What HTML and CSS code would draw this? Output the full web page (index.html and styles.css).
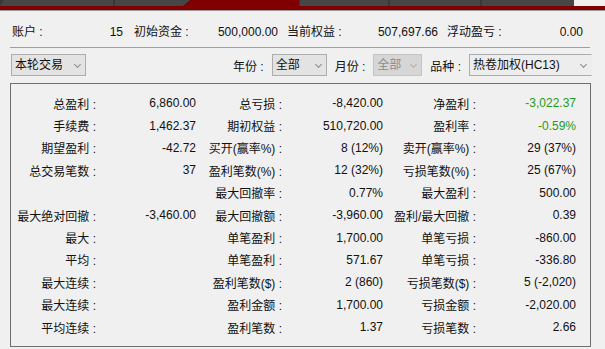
FILE: index.html
```html
<!DOCTYPE html>
<html lang="zh-CN">
	<head>
		<meta charset="UTF-8">
		<title>交易统计</title>
		<link rel="stylesheet" href="styles.css">
	</head>
	<body>
		<div class="tabs">
			<div class="tab tabFirst"></div>
			<div class="tab tabSecond"></div>
			<div class="tab tabActive"></div>
			<div class="tab tabFour"></div>
			<div class="tab tabFive"></div>
			<div class="tab tabSix"></div>
		</div>
		<div class="tabLine"></div>

		<div class="summary">
			<div class="pair pairAccount"><span>账户 :</span><span>15</span></div>
			<div class="pair pairInit"><span>初始资金 :</span><span>500,000.00</span></div>
			<div class="pair pairEquity"><span>当前权益 :</span><span>507,697.66</span></div>
			<div class="pair pairFloat"><span>浮动盈亏 :</span><span>0.00</span></div>
		</div>

		<div class="filters">
			<div class="combo comboRound">本轮交易<i class="arrow"></i></div>
			<span class="filterLabel labelYear">年份 :</span>
			<div class="combo comboYear">全部<i class="arrow"></i></div>
			<span class="filterLabel">月份 :</span>
			<div class="combo comboMonth disabled">全部<i class="arrow"></i></div>
			<span class="filterLabel">品种 :</span>
			<div class="combo comboKind">热卷加权(HC13)<i class="arrow"></i></div>
		</div>

		<div class="panel">
			<span>总盈利 :</span><span>6,860.00</span>
			<span>总亏损 :</span><span>-8,420.00</span>
			<span>净盈利 :</span><span class="green">-3,022.37</span>

			<span>手续费 :</span><span>1,462.37</span>
			<span>期初权益 :</span><span>510,720.00</span>
			<span>盈利率 :</span><span class="green">-0.59%</span>

			<span>期望盈利 :</span><span>-42.72</span>
			<span>买开(赢率%) :</span><span>8 (12%)</span>
			<span>卖开(赢率%) :</span><span>29 (37%)</span>

			<span>总交易笔数 :</span><span>37</span>
			<span>盈利笔数(%) :</span><span>12 (32%)</span>
			<span>亏损笔数(%) :</span><span>25 (67%)</span>

			<span></span><span></span>
			<span>最大回撤率 :</span><span>0.77%</span>
			<span>最大盈利 :</span><span>500.00</span>

			<span>最大绝对回撤 :</span><span>-3,460.00</span>
			<span>最大回撤额 :</span><span>-3,960.00</span>
			<span>盈利/最大回撤 :</span><span>0.39</span>

			<span>最大 :</span><span></span>
			<span>单笔盈利 :</span><span>1,700.00</span>
			<span>单笔亏损 :</span><span>-860.00</span>

			<span>平均 :</span><span></span>
			<span>单笔盈利 :</span><span>571.67</span>
			<span>单笔亏损 :</span><span>-336.80</span>

			<span>最大连续 :</span><span></span>
			<span>盈利笔数($) :</span><span>2 (860)</span>
			<span>亏损笔数($) :</span><span>5 (-2,020)</span>

			<span>最大连续 :</span><span></span>
			<span>盈利金额 :</span><span>1,700.00</span>
			<span>亏损金额 :</span><span>-2,020.00</span>

			<span>平均连续 :</span><span></span>
			<span>盈利笔数 :</span><span>1.37</span>
			<span>亏损笔数 :</span><span>2.66</span>
		</div>
	</body>
</html>
```

FILE: styles.css
```css
body {
	margin: 0;
	background-color: #f0f0f0;
	font-family: "Liberation Sans", "Noto Sans CJK SC", sans-serif;
	font-size: 12px;
	color: #111;
}
.tabs {
	display: flex;
	width: 574px;
	height: 6px;
	background-color: #383838;
}
.tab {
	background-color: #464646;
	margin-right: 2px;
}
.tabFirst {
	width: 113px;
	clip-path: polygon(4px 0, 100% 0, 100% 100%, 0 100%);
}
.tabSecond {
	width: 75px;
	margin-right: -7px;
}
.tabActive {
	width: 116px;
	margin-right: 1px;
	background-color: #800000;
	clip-path: polygon(7px 0, 100% 0, 100% 100%, 0 100%);
}
.tabFour {
	width: 88px;
}
.tabFive {
	width: 90px;
}
.tabSix {
	width: 92px;
	margin-right: 0;
}
.tabLine {
	height: 4px;
	background-color: #800000;
	border-bottom: 1px solid #9a9a9a;
}
.summary {
	display: flex;
	margin: 0 15px 0 10px;
	padding: 14px 0 0 2px;
	height: 22px;
	line-height: 14px;
	border-bottom: 1px solid #a0a0a0;
}
.pair {
	display: flex;
	justify-content: space-between;
}
.pairAccount {
	width: 111px;
}
.pairInit {
	width: 144px;
	margin-left: 11px;
}
.pairEquity {
	width: 151px;
	margin-left: 9px;
}
.pairFloat {
	width: 136px;
	margin-left: 9px;
}
.filters {
	display: flex;
	align-items: center;
	height: 22px;
	margin: 6px 13px 0 11px;
}
.combo {
	position: relative;
	box-sizing: border-box;
	height: 22px;
	line-height: 20px;
	padding-left: 3px;
	border: 1px solid #adadad;
	background-color: #e3e3e3;
}
.arrow {
	position: absolute;
	right: 5px;
	top: 7px;
	width: 4px;
	height: 4px;
	border-right: 1px solid #8a8a8a;
	border-bottom: 1px solid #8a8a8a;
	transform: rotate(45deg);
}
.comboRound {
	width: 75px;
}
.comboYear {
	width: 55px;
	margin-left: 8px;
}
.comboMonth {
	width: 49px;
	margin-left: 8px;
}
.comboKind {
	width: 123px;
	margin-left: 8px;
	background-color: #ededed;
	border-right-color: #ededed;
}
.disabled {
	background-color: #d6d6d6;
	border-color: #c4c4c4;
	color: #8c8c8c;
}
.disabled .arrow {
	border-color: #b0b0b0;
}
.filterLabel {
	margin-left: 8px;
}
.labelYear {
	margin-left: auto;
}
.panel {
	box-sizing: border-box;
	height: 264px;
	margin: 7px 14px 0 10px;
	padding-top: 8px;
	border: 1px solid #6e6e6e;
	display: grid;
	grid-template-columns: 85px 100px 86px 101px 93px 100px;
	grid-auto-rows: 22.4px;
	align-items: center;
	text-align: right;
	white-space: nowrap;
}
.green {
	color: #1f9a1f;
}
```
